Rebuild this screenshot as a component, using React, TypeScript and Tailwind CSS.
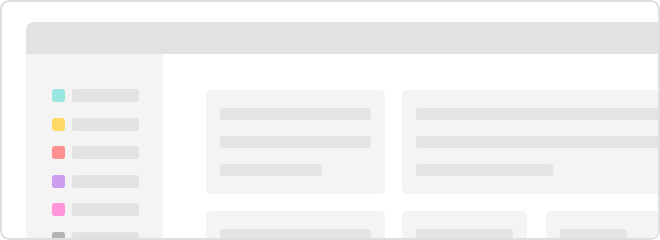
import React from "react";

const items = [
  "bg-[#9be6e0]",
  "bg-[#ffd966]",
  "bg-[#ff9090]",
  "bg-[#cc9cee]",
  "bg-[#ff94d8]",
  "bg-[#b3b3b3]",
];

export default function App() {
  return (
    <div className="w-[660px] h-[240px] bg-white">
      <div className="w-[660px] h-[240px] border-2 border-[#dfdfdf] rounded-[9px] overflow-hidden pl-6 pt-5 bg-white">
        <div className="w-[700px] h-[260px] rounded-tl-[8px] overflow-hidden flex flex-col">
          <div className="h-8 bg-[#e2e2e2] shrink-0" />
          <div className="flex flex-1">
            <div className="w-[137px] shrink-0 bg-[#f4f4f4] pl-[26px] pt-[35px] flex flex-col gap-[15.6px]">
              {items.map((c, i) => (
                <div key={i} className="flex items-center">
                  <div className={`w-[13px] h-[13px] rounded-[3px] ${c}`} />
                  <div className="ml-[7px] w-[67px] h-[13px] rounded-[3px] bg-[#e2e2e2]" />
                </div>
              ))}
            </div>
            <div className="flex-1 bg-white pl-[43px] pt-9 flex flex-col gap-[17px]">
              <div className="flex gap-[17px]">
                <div className="w-[179px] h-[104px] shrink-0 rounded-[5px] bg-[#f4f4f4] px-[14px] pt-[18px] flex flex-col gap-4">
                  <div className="h-3 w-full rounded-[3px] bg-[#e4e4e4]" />
                  <div className="h-3 w-full rounded-[3px] bg-[#e4e4e4]" />
                  <div className="h-3 w-[102px] rounded-[3px] bg-[#e4e4e4]" />
                </div>
                <div className="w-[300px] h-[104px] shrink-0 rounded-[5px] bg-[#f4f4f4] px-[14px] pt-[18px] flex flex-col gap-4">
                  <div className="h-3 w-full rounded-[3px] bg-[#e4e4e4]" />
                  <div className="h-3 w-full rounded-[3px] bg-[#e4e4e4]" />
                  <div className="h-3 w-[137px] rounded-[3px] bg-[#e4e4e4]" />
                </div>
              </div>
              <div className="flex">
                <div className="w-[179px] h-[104px] shrink-0 rounded-[5px] bg-[#f4f4f4] px-[14px] pt-[18px]">
                  <div className="h-3 w-full rounded-[3px] bg-[#e4e4e4]" />
                </div>
                <div className="ml-[17px] w-[125px] h-[104px] shrink-0 rounded-[5px] bg-[#f4f4f4] px-[14px] pt-[18px]">
                  <div className="h-3 w-[97px] rounded-[3px] bg-[#e4e4e4]" />
                </div>
                <div className="ml-[19px] w-[160px] h-[104px] shrink-0 rounded-[5px] bg-[#f4f4f4] px-[14px] pt-[18px]">
                  <div className="h-3 w-[67px] rounded-[3px] bg-[#e4e4e4]" />
                </div>
              </div>
            </div>
          </div>
        </div>
      </div>
    </div>
  );
}
